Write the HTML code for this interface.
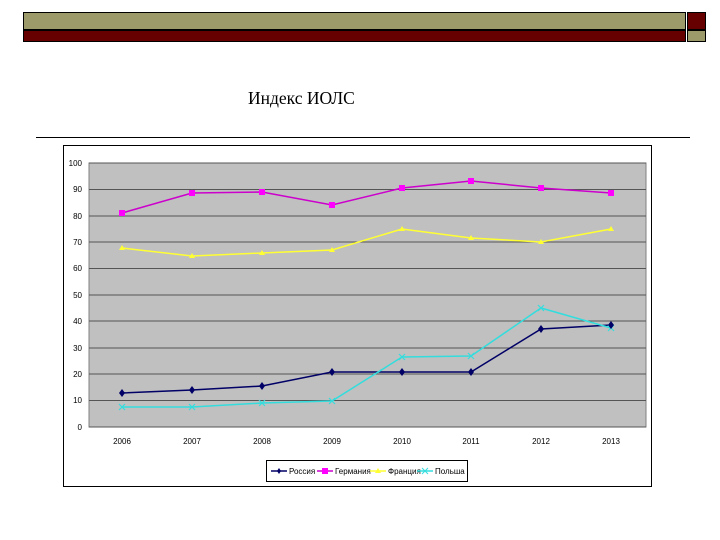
<!DOCTYPE html>
<html><head><meta charset="utf-8"><style>
body{margin:0;width:720px;height:540px;background:#fff;position:relative;overflow:hidden;font-family:"Liberation Sans",sans-serif}
.a{position:absolute}
</style></head><body>
<div class="a" style="left:23px;top:12px;width:663px;height:18px;background:#9c9a6a;border:1px solid #000;box-sizing:border-box"></div>
<div class="a" style="left:23px;top:30px;width:663px;height:12px;background:#660000;border:1px solid #000;box-sizing:border-box"></div>
<div class="a" style="left:687px;top:12px;width:19px;height:18px;background:#660000;border:1px solid #000;box-sizing:border-box"></div>
<div class="a" style="left:687px;top:30px;width:19px;height:12px;background:#9c9a6a;border:1px solid #000;box-sizing:border-box"></div>
<div class="a" style="left:248px;top:88px;font-family:'Liberation Serif',serif;font-size:17.5px">Индекс ИОЛС</div>
<div class="a" style="left:36px;top:137px;width:654px;height:1px;background:#000"></div>
<svg class="a" style="left:0;top:0" width="720" height="540">
<rect x="63.5" y="145.5" width="588" height="341" fill="#fff" stroke="#000"/>
<rect x="89" y="163" width="557" height="264" fill="#c0c0c0" stroke="#808080"/>
<g stroke="#555" stroke-width="1">
<line x1="89" x2="646" y1="189.5" y2="189.5"/><line x1="89" x2="646" y1="216" y2="216"/><line x1="89" x2="646" y1="242" y2="242"/><line x1="89" x2="646" y1="268.5" y2="268.5"/><line x1="89" x2="646" y1="295" y2="295"/><line x1="89" x2="646" y1="321" y2="321"/><line x1="89" x2="646" y1="348" y2="348"/><line x1="89" x2="646" y1="374" y2="374"/><line x1="89" x2="646" y1="400.5" y2="400.5"/><line x1="89" x2="646" y1="163" y2="163"/><line x1="89" x2="646" y1="427" y2="427"/>
</g>
<g font-size="8" fill="#000" text-anchor="end">
<text x="82" y="166">100</text><text x="82" y="192">90</text><text x="82" y="219">80</text><text x="82" y="245">70</text><text x="82" y="271">60</text><text x="82" y="298">50</text><text x="82" y="324">40</text><text x="82" y="351">30</text><text x="82" y="377">20</text><text x="82" y="403">10</text><text x="82" y="430">0</text>
</g>
<g font-size="8" text-anchor="middle">
<text x="122" y="444">2006</text><text x="192" y="444">2007</text><text x="262" y="444">2008</text><text x="332" y="444">2009</text><text x="402" y="444">2010</text><text x="471" y="444">2011</text><text x="541" y="444">2012</text><text x="611" y="444">2013</text>
</g>
<polyline fill="none" stroke="#cc00cc" stroke-width="1.5" points="122,213 192,193 262,192 332,205 402,188 471,181 541,188 611,193"/>
<g fill="#ff00ff"><rect x="119" y="210" width="6" height="6"/><rect x="189" y="190" width="6" height="6"/><rect x="259" y="189" width="6" height="6"/><rect x="329" y="202" width="6" height="6"/><rect x="399" y="185" width="6" height="6"/><rect x="468" y="178" width="6" height="6"/><rect x="538" y="185" width="6" height="6"/><rect x="608" y="190" width="6" height="6"/></g>
<polyline fill="none" stroke="#ffff33" stroke-width="1.5" points="122,248 192,256 262,253 332,250 402,229 471,238 541,242 611,229"/>
<g fill="#ffff33"><path d="M122 245l3 5h-6z"/><path d="M192 253l3 5h-6z"/><path d="M262 250l3 5h-6z"/><path d="M332 247l3 5h-6z"/><path d="M402 226l3 5h-6z"/><path d="M471 235l3 5h-6z"/><path d="M541 239l3 5h-6z"/><path d="M611 226l3 5h-6z"/></g>
<polyline fill="none" stroke="#000066" stroke-width="1.5" points="122,393 192,390 262,386 332,372 402,372 471,372 541,329 611,325"/>
<polyline fill="none" stroke="#33dddd" stroke-width="1.5" points="122,407 192,407 262,403 332,401 402,357 471,356 541,308 611,328"/>
<g stroke="#33dddd" stroke-width="1.2"><path d="M119 404l6 6M125 404l-6 6M189 404l6 6M195 404l-6 6M259 400l6 6M265 400l-6 6M329 398l6 6M335 398l-6 6M399 354l6 6M405 354l-6 6M468 353l6 6M474 353l-6 6M538 305l6 6M544 305l-6 6M608 325l6 6M614 325l-6 6"/></g>
<g fill="#000066"><path d="M122 389l3 4-3 4-3-4z"/><path d="M192 386l3 4-3 4-3-4z"/><path d="M262 382l3 4-3 4-3-4z"/><path d="M332 368l3 4-3 4-3-4z"/><path d="M402 368l3 4-3 4-3-4z"/><path d="M471 368l3 4-3 4-3-4z"/><path d="M541 325l3 4-3 4-3-4z"/><path d="M611 321l3 4-3 4-3-4z"/></g>
<rect x="266.5" y="460.5" width="201" height="21" fill="#fff" stroke="#000"/>
<g font-size="8"><line x1="271" x2="287" y1="471" y2="471" stroke="#000066" stroke-width="1.5"/><path d="M279 468l2 3-2 3-2-3z" fill="#000066"/><text x="289" y="474">Россия</text>
<line x1="317" x2="333" y1="471" y2="471" stroke="#cc00cc" stroke-width="1.5"/><rect x="322" y="468" width="6" height="6" fill="#f0f"/><text x="335" y="474">Германия</text>
<line x1="370" x2="386" y1="471" y2="471" stroke="#ffff33" stroke-width="1.5"/><path d="M378 468l3 5h-6z" fill="#ffff33"/><text x="388" y="474">Франция</text>
<line x1="417" x2="433" y1="471" y2="471" stroke="#33dddd" stroke-width="1.5"/><path d="M422 468l6 6M428 468l-6 6" stroke="#33dddd"/><text x="435" y="474">Польша</text></g>
</svg>
</body></html>
